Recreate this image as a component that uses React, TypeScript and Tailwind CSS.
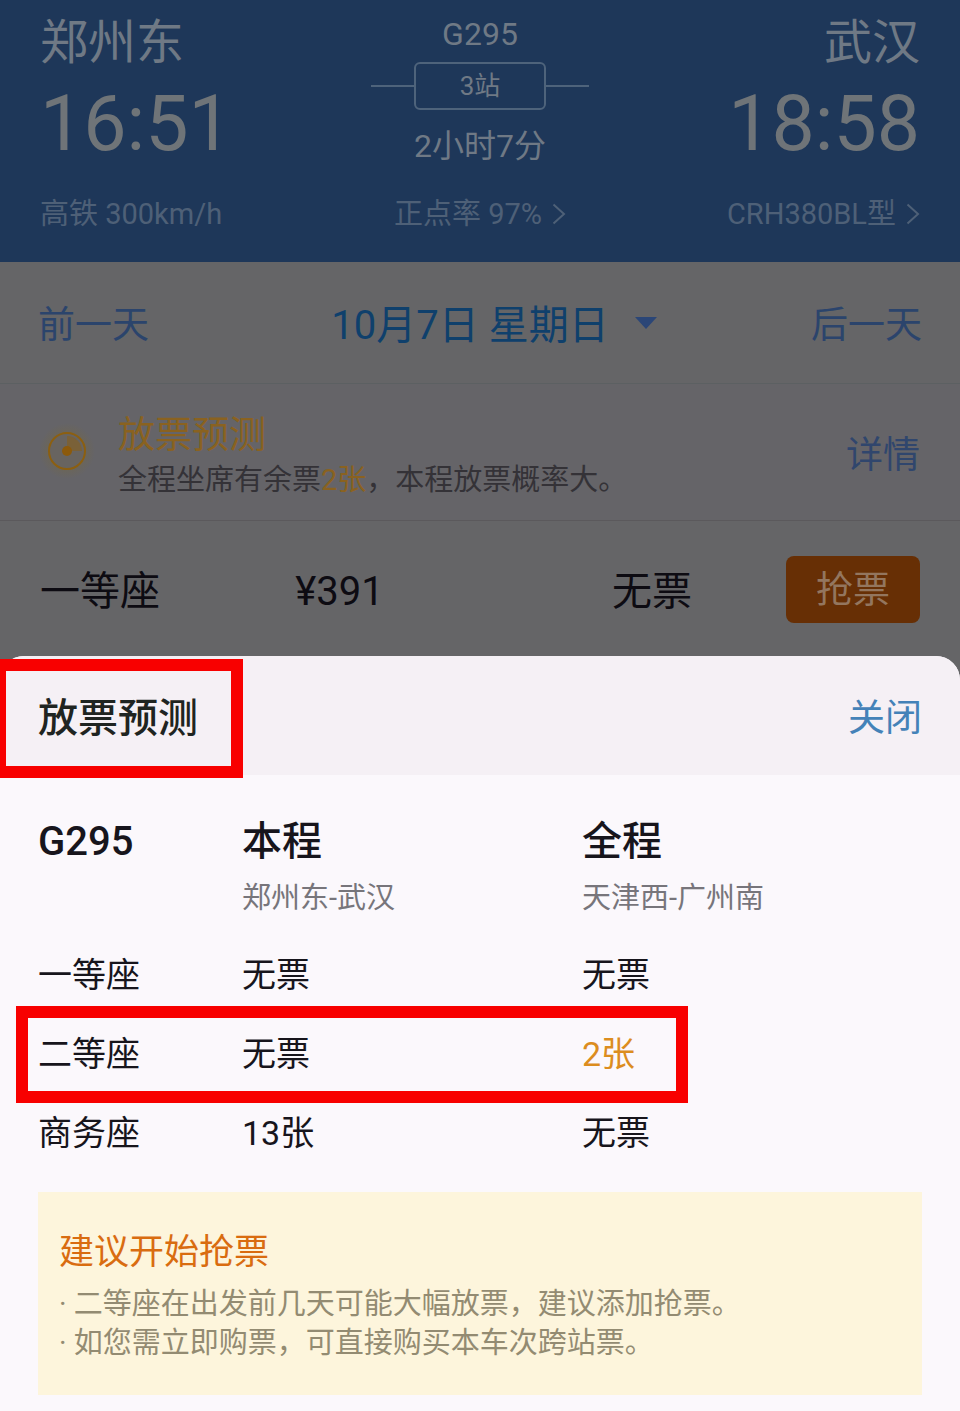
import type { ReactNode } from "react";

type SeatRow = {
  seat: string;
  section: string;
  whole: string;
  highlight?: boolean;
};

const SEATS: SeatRow[] = [
  { seat: "一等座", section: "无票", whole: "无票" },
  { seat: "二等座", section: "无票", whole: "2张", highlight: true },
  { seat: "商务座", section: "13张", whole: "无票" },
];

const TIPS = [
  "· 二等座在出发前几天可能大幅放票，建议添加抢票。",
  "· 如您需立即购票，可直接购买本车次跨站票。",
];

function Chevron() {
  return (
    <svg width="14" height="22" viewBox="0 0 14 22" fill="none" aria-hidden="true">
      <path d="M1.5 1.5 12 11 1.5 20.5" stroke="currentColor" strokeWidth="2" />
    </svg>
  );
}

function RadarIcon() {
  return (
    <svg className="mb-3" width="60" height="60" viewBox="0 0 60 60" fill="none" aria-hidden="true">
      <defs>
        <radialGradient id="glow">
          <stop offset="0.5" stopColor="#75683f" stopOpacity="0.5" />
          <stop offset="1" stopColor="#75683f" stopOpacity="0" />
        </radialGradient>
      </defs>
      <circle cx="31" cy="31" r="28" fill="url(#glow)" />
      <circle cx="31" cy="31" r="18" fill="#686460" stroke="#8c5f10" strokeWidth="2" />
      <path d="M31 31V16a15 15 0 0 1 15 15Z" fill="#7a6138" />
      <circle cx="31" cy="31" r="5" fill="#8c5a0c" />
    </svg>
  );
}

function LinkButton({ children, className }: { children: ReactNode; className: string }) {
  return (
    <button type="button" className={`cursor-pointer text-[37px] leading-[48px] ${className}`}>
      {children}
    </button>
  );
}

function TrainHeader() {
  return (
    <header className="bg-[#1e3759] px-10 pt-3 pb-7 text-[#6f7985]">
      <div className="grid grid-cols-3">
        <div>
          <p className="text-[48px] leading-[62px]">郑州东</p>
          <p className="mt-1.5 text-[77px] leading-[88px] text-[#6f7478]">16:51</p>
        </div>
        <div className="flex flex-col items-center">
          <p className="text-[32px] leading-[44px]">G295</p>
          <div className="mt-1.5 flex items-center">
            <span className="h-0.5 w-[43px] bg-[#4e637b]" />
            <span className="rounded-md border-2 border-[#4e637b] px-11 text-[26px] leading-[44px]">
              3站
            </span>
            <span className="h-0.5 w-[43px] bg-[#4e637b]" />
          </div>
          <p className="mt-3 text-[32px] leading-[48px]">2小时7分</p>
        </div>
        <div className="text-right">
          <p className="text-[48px] leading-[62px]">武汉</p>
          <p className="mt-1.5 text-[77px] leading-[88px] text-[#6f7478]">18:58</p>
        </div>
      </div>
      <div className="mt-6 grid grid-cols-3 text-[29px] leading-10 text-[#4e6077]">
        <p>高铁 300km/h</p>
        <button type="button" className="flex cursor-pointer items-center justify-center gap-2.5">
          正点率 97% <Chevron />
        </button>
        <button type="button" className="flex cursor-pointer items-center justify-end gap-2.5">
          CRH380BL型 <Chevron />
        </button>
      </div>
    </header>
  );
}

function DateBar() {
  return (
    <nav className="flex items-center justify-between border-b border-[#5c6062] px-[38px] pt-10 pb-[33px]">
      <LinkButton className="text-[#2b446c]">前一天</LinkButton>
      <button
        type="button"
        className="flex cursor-pointer items-center gap-[26px] pl-7 text-[40px] leading-[48px] text-[#0f406c]"
      >
        10月7日 星期日
        <svg className="mb-1.5" width="22" height="12" viewBox="0 0 22 12" aria-hidden="true">
          <path d="M0 0h22L11 12Z" fill="#2b4677" />
        </svg>
      </button>
      <LinkButton className="text-[#2b446c]">后一天</LinkButton>
    </nav>
  );
}

function ForecastBanner() {
  return (
    <section className="flex items-center border-b border-[#5b595c] bg-[#656468] pt-7 pr-10 pb-5 pl-9">
      <RadarIcon />
      <div className="ml-[22px] flex-1">
        <h2 className="text-[37px] leading-[48px] text-[#8a6220]">放票预测</h2>
        <p className="text-[29px] leading-10 text-[#343237]">
          全程坐席有余票<span className="text-[#8a6220]">2张</span>，本程放票概率大。
        </p>
      </div>
      <LinkButton className="text-[#30466d]">详情</LinkButton>
    </section>
  );
}

function SeatLine() {
  return (
    <section className="flex items-center px-10 pt-[35px] pb-[33px] text-[40px] leading-[48px] text-[#0d0b12]">
      <p className="w-[29%] pt-1">一等座</p>
      <p className="flex-1 pt-1">¥391</p>
      <p className="mr-[94px] pt-1">无票</p>
      <button
        type="button"
        className="cursor-pointer rounded-lg bg-[#672f05] px-[30px] pt-[11px] pb-2 text-[37px] text-[#93765f]"
      >
        抢票
      </button>
    </section>
  );
}

function ForecastSheet() {
  return (
    <section className="rounded-t-3xl bg-[#fbf8fc]" role="dialog" aria-labelledby="sheet-title">
      <div className="relative flex items-center justify-between rounded-t-3xl bg-[#f5f0f5] px-[38px] pt-[39px] pb-8">
        <h2 id="sheet-title" className="text-[40px] leading-[48px] font-medium text-[#1f2421]">
          放票预测
        </h2>
        <LinkButton className="text-[#4482b8]">关闭</LinkButton>
        <div className="pointer-events-none absolute top-[3px] -left-1.5 h-[119px] w-[249px] border-12 border-[#f80000]" />
      </div>

      <div className="px-[38px] pt-[39px] pb-4">
        <table className="w-full table-fixed text-left text-[#17151c]">
          <thead>
            <tr className="align-top text-[40px] leading-[56px]">
              <th className="w-3/13 font-medium">G295</th>
              <th className="w-5/13 pb-2.5 font-medium">
                本程
                <span className="block text-[29px] font-normal text-[#77757b]">郑州东-武汉</span>
              </th>
              <th className="w-5/13 pb-2.5 font-medium">
                全程
                <span className="block text-[29px] font-normal text-[#77757b]">天津西-广州南</span>
              </th>
            </tr>
          </thead>
          <tbody>
            {SEATS.map((row) => (
              <tr key={row.seat} className="relative h-[79px] text-[34px]">
                <th className="font-normal">
                  {row.seat}
                  {row.highlight && (
                    <span className="pointer-events-none absolute -top-[9px] -left-[22px] h-[97px] w-[672px] border-12 border-[#f80000]" />
                  )}
                </th>
                <td>{row.section}</td>
                <td className={row.highlight ? "text-[#dc8d1f]" : ""}>{row.whole}</td>
              </tr>
            ))}
          </tbody>
        </table>

        <div className="mt-[19px] bg-[#fdf5dc] px-[21px] pt-[37px] pb-8">
          <h3 className="text-[35px] leading-[48px] text-[#d96c10]">建议开始抢票</h3>
          <ul className="mt-2 text-[29px] leading-[39px] text-[#938b72]">
            {TIPS.map((tip) => (
              <li key={tip}>{tip}</li>
            ))}
          </ul>
        </div>
      </div>
    </section>
  );
}

export default function App() {
  return (
    <main className="min-h-screen overflow-x-hidden bg-[#656567] font-[Roboto,'Noto_Sans_CJK_SC',sans-serif]">
      <TrainHeader />
      <DateBar />
      <ForecastBanner />
      <SeatLine />
      <ForecastSheet />
    </main>
  );
}
